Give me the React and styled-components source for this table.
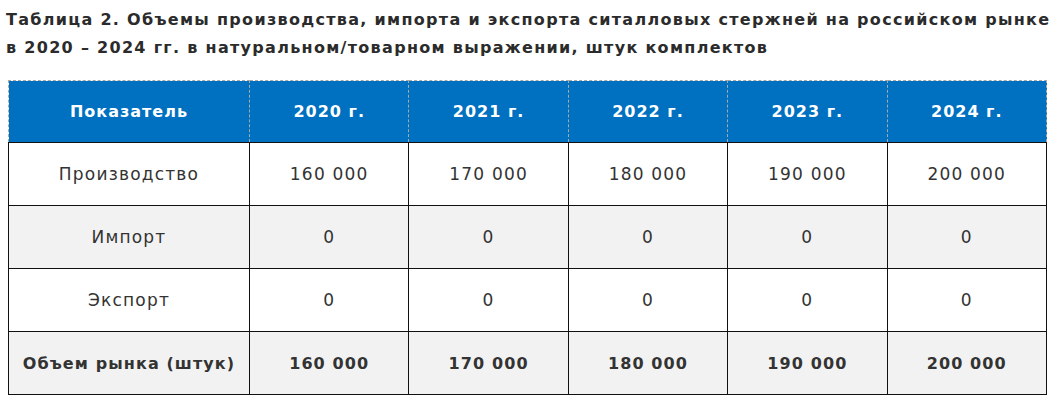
import React from 'react'
import styled, { createGlobalStyle } from 'styled-components'

const GlobalStyle = createGlobalStyle`
    body {
        margin: 0;
        background: #fff;
        font-family: "DejaVu Sans", "Open Sans", sans-serif;
        color: #333;
    }
`

const Page = styled.div`
    padding: 6px 8px 0 8px;
`

const Caption = styled.div`
    font-weight: 700;
    font-size: 16px;
    line-height: 28px;
    color: #2b2b2b;
    letter-spacing: 1.3px;
    margin-bottom: 18px;
    margin-left: -2px;
    white-space: nowrap;
`

const Table = styled.table`
    border-collapse: collapse;
    width: 1039px;
    table-layout: fixed;
`

const HeadCell = styled.th`
    background: #0070c0;
    color: #fff;
    font-weight: 700;
    font-size: 16px;
    height: 61px;
    padding: 0;
    border: 1px dashed #a8a8a8;
    letter-spacing: 1px;

    &:first-child {
        width: 240px;
    }
`

const Row = styled.tr`
    background: ${p => (p.$shade ? '#f2f2f2' : '#fff')};
`

const Cell = styled.td`
    border: 1px solid #111;
    height: 62px;
    padding: 0;
    text-align: center;
    font-size: ${p => (p.$bold ? '16px' : '17px')};
    font-weight: ${p => (p.$bold ? 700 : 400)};
    color: #333;
    letter-spacing: ${p => (p.$bold ? '1.1px' : '1.2px')};
    white-space: nowrap;
`

const years = ['2020 г.', '2021 г.', '2022 г.', '2023 г.', '2024 г.']

const rows = [
    { name: 'Производство', values: ['160 000', '170 000', '180 000', '190 000', '200 000'] },
    { name: 'Импорт', values: ['0', '0', '0', '0', '0'] },
    { name: 'Экспорт', values: ['0', '0', '0', '0', '0'] },
    { name: 'Объем рынка (штук)', values: ['160 000', '170 000', '180 000', '190 000', '200 000'], bold: true },
]

export default function App() {
    return (
        <Page>
            <GlobalStyle />
            <Caption>
                Таблица 2. Объемы производства, импорта и экспорта ситалловых стержней на российском рынке
                <br />
                в 2020 – 2024 гг. в натуральном/товарном выражении, штук комплектов
            </Caption>
            <Table>
                <thead>
                    <tr>
                        <HeadCell>Показатель</HeadCell>
                        {years.map(y => (
                            <HeadCell key={y}>{y}</HeadCell>
                        ))}
                    </tr>
                </thead>
                <tbody>
                    {rows.map((r, i) => (
                        <Row key={r.name} $shade={i % 2 === 1}>
                            <Cell $bold={r.bold}>{r.name}</Cell>
                            {r.values.map((v, j) => (
                                <Cell key={j} $bold={r.bold}>{v}</Cell>
                            ))}
                        </Row>
                    ))}
                </tbody>
            </Table>
        </Page>
    )
}
